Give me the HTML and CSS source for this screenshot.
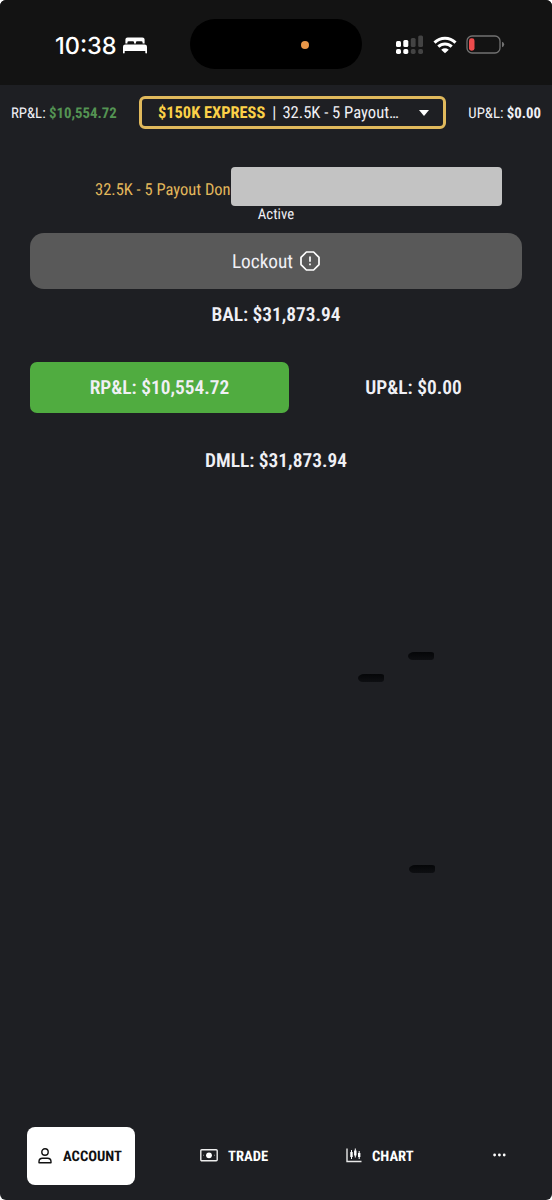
FILE: index.html
```html
<!DOCTYPE html>
<html lang="en">
<head>
    <meta charset="UTF-8">
    <meta name="viewport" content="width=device-width, initial-scale=1.0">
    <title>Account</title>
    <link rel="stylesheet" href="styles.css">
</head>
<body>
    <div class="screen">
        <!-- Status bar -->
        <div class="status-bar">
            <div class="status-left">
                <span class="clock">10:38</span>
                <svg class="bed" width="24" height="17" viewBox="0 0 24 17" fill="#fff">
                    <path d="M2.4 6.6V2.6Q2.4 .4 4.6 .4H19.400Q21.600 .4 21.600 2.600V6.600H19.600V5.500Q19.600 4.200 18.300 4.200H14.200Q12.900 4.200 12.900 5.500V6.600H11.100V5.500Q11.100 4.200 9.800 4.200H5.700Q4.400 4.200 4.400 5.500V6.600Z"/>
                    <path d="M0 15.800V9.800Q0 7.400 2.400 7.400H21.600Q24 7.400 24 9.800V15.800Q24 16.600 23.200 16.600T22.300 15.800V14H1.700V15.800Q1.700 16.600 .9 16.600T0 15.800Z"/>
                </svg>
            </div>
            <div class="island"><span class="mic-dot"></span></div>
            <div class="status-right">
                <svg class="signal" width="28" height="20" viewBox="0 0 28 20">
                    <g fill="#fff">
                        <rect x="0" y="6" width="5" height="6" rx="1.500"/>
                        <rect x="7.300" y="5" width="5" height="7" rx="1.500"/>
                        <rect x="0" y="14" width="5" height="5" rx="1.700"/>
                        <rect x="7.300" y="14" width="5" height="5" rx="1.700"/>
                    </g>
                    <g fill="#434343">
                        <rect x="14.800" y="3" width="4.800" height="9" rx="1.500"/>
                        <rect x="22.200" y="0.500" width="4.800" height="11.500" rx="1.500"/>
                        <rect x="14.800" y="14" width="4.800" height="5" rx="1.700"/>
                        <rect x="22.200" y="14" width="4.800" height="5" rx="1.700"/>
                    </g>
                </svg>
                <svg class="wifi" width="24" height="18" viewBox="0 0 24 18" fill="none" stroke="#fff" stroke-width="3">
                    <path d="M1.500 6.600Q6 2.200 12 2.200T22.500 6.600"/>
                    <path d="M5.300 10.700Q8.200 7.900 12 7.900T18.700 10.700"/>
                    <path d="M8.200 13.700Q12 10.800 15.800 13.700L12 17.300Z" fill="#fff" stroke="none"/>
                </svg>
                <svg class="battery" width="39" height="19" viewBox="0 0 39 19">
                    <rect x="1" y="1" width="33" height="17" rx="5" fill="none" stroke="#727272" stroke-width="1.300"/>
                    <rect x="3" y="3.300" width="5.500" height="12.400" rx="2.400" fill="#ed4b4c"/>
                    <path d="M36 6.800Q38.200 7.300 38.200 9.500T36 12.200Z" fill="#727272"/>
                </svg>
            </div>
        </div>

        <!-- Header with account selector -->
        <div class="header">
            <div class="pnl">RP&amp;L: <b class="gain">$10,554.72</b></div>
            <div class="account-select">
                <b class="plan">$150K EXPRESS</b>
                <span class="divider">|</span>
                <span class="account-name">32.5K - 5 Payout…</span>
                <span class="caret"></span>
            </div>
            <div class="pnl unrealized">UP&amp;L: <b>$0.00</b></div>
        </div>

        <div class="content">
            <div class="account-title">
                <span class="title-text">32.5K - 5 Payout Don</span>
                <span class="account-id"></span>
            </div>
            <div class="account-status">Active</div>
            <div class="lockout">
                <span>Lockout</span>
                <svg width="20" height="20" viewBox="0 0 20 20" fill="none" stroke="#fff" stroke-width="1.700">
                    <path d="M6.400 1H13.600L19 6.400V13.600L13.600 19H6.400L1 13.600V6.400Z" stroke-linejoin="round"/>
                    <path d="M10 5.500V10.800M10 12.500V14.300"/>
                </svg>
            </div>
            <div class="balance">BAL: $31,873.94</div>
            <div class="pnl-row">
                <div class="pnl-box positive">RP&amp;L: $10,554.72</div>
                <div class="pnl-box">UP&amp;L: $0.00</div>
            </div>
            <div class="loss-limit">DMLL: $31,873.94</div>
        </div>

        <!-- Dark marks over the empty area -->
        <span class="mark mark-top"></span>
        <span class="mark mark-middle"></span>
        <span class="mark mark-bottom"></span>

        <!-- Bottom navigation -->
        <div class="nav">
            <div class="nav-item active">
                <svg width="14" height="16" viewBox="0 0 14 16" fill="none" stroke="#111" stroke-width="1.400">
                    <circle cx="7" cy="4" r="3.200"/>
                    <path d="M1 14.800V13.800Q1 10.300 4.500 10.300H9.500Q13 10.300 13 13.800V14.800Z" stroke-linejoin="round"/>
                </svg>
                <span>ACCOUNT</span>
            </div>
            <div class="nav-item trade">
                <svg width="18" height="13" viewBox="0 0 18 13">
                    <rect x=".8" y=".8" width="16.400" height="11" rx="1" fill="none" stroke="#eee" stroke-width="1.400"/>
                    <circle cx="9" cy="6.300" r="2.900" fill="#fff"/>
                    <path d="M3 5.800h.9v.9H3zM14.100 5.800H15v.9h-.9z" fill="#999"/>
                </svg>
                <span>TRADE</span>
            </div>
            <div class="nav-item chart">
                <svg width="16" height="15" viewBox="0 0 16 15">
                    <path d="M1 .5V13.500H15.500" fill="none" stroke="#e8e8e8" stroke-width="1.400"/>
                    <path d="M5.500 2V11M9.300 .5V9.500M13.200 3V11" stroke="#fff" stroke-width="1"/>
                    <path d="M4.300 4h2.400v5H4.300zM8.100 2.400h2.400v5H8.100zM12 5h2.400v4H12z" fill="#fff"/>
                </svg>
                <span>CHART</span>
            </div>
            <div class="nav-item more">
                <svg width="13" height="4" viewBox="0 0 13 4" fill="#fff">
                    <circle cx="1.600" cy="2" r="1.400"/>
                    <circle cx="6.400" cy="2" r="1.400"/>
                    <circle cx="11.200" cy="2" r="1.400"/>
                </svg>
            </div>
        </div>
    </div>
</body>
</html>
```
FILE: styles.css
```css
* {
    box-sizing: border-box;
}

body {
    margin: 0;
    background: #fff;
    font-family: "Roboto Condensed", Roboto, sans-serif;
    font-stretch: 75%;
    text-rendering: geometricPrecision;
    color: #f0f0f5;
}

svg {
    display: block;
    flex-shrink: 0;
}

.screen {
    position: relative;
    display: flex;
    flex-direction: column;
    width: 552px;
    height: 1200px;
    background: #1e1f23;
    border-radius: 6px;
    overflow: hidden;
    white-space: nowrap;
}

/* Status bar */
.status-bar {
    display: grid;
    grid-template-columns: 190px 172px 190px;
    height: 85px;
    padding-top: 19px;
    background: #131313;
}

.status-left {
    display: flex;
    align-items: center;
    height: 51px;
    padding-left: 55px;
    gap: 6px;
}

.clock {
    width: 62px;
    padding-top: 1px;
    font-family: Inter, sans-serif;
    font-stretch: normal;
    font-size: 23.5px;
    font-weight: 550;
    color: #fff;
}

.bed {
    margin-top: 1px;
}

.island {
    display: flex;
    align-items: center;
    height: 50px;
    padding-left: 111px;
    background: #000;
    border-radius: 25px;
}

.mic-dot {
    width: 8px;
    height: 8px;
    margin-top: 1px;
    border-radius: 50%;
    background: #e99748;
}

.status-right {
    display: flex;
    align-items: center;
    height: 51px;
    padding-left: 34px;
}

.wifi {
    margin-left: 9px;
}

.battery {
    margin-left: 9px;
}

/* Header */
.header {
    display: flex;
    align-items: center;
    justify-content: space-between;
    height: 55px;
    padding: 0 11px;
}

.pnl {
    width: 128px;
    padding-top: 1px;
    font-size: 14.8px;
}

.pnl.unrealized {
    width: 95px;
    text-align: right;
}

.gain {
    color: #549453;
}

.account-select {
    display: flex;
    align-items: center;
    width: 307px;
    height: 33px;
    padding: 1px 14px 0 16px;
    border: 3px solid #e0b95c;
    border-radius: 6px;
    font-size: 16.6px;
}

.plan {
    font-size: 16.4px;
    color: #fbd148;
}

.divider {
    margin: 0 6px 0 7px;
}

.plan,
.divider,
.account-name {
    padding-top: 1px;
}

.caret {
    margin-left: auto;
    border-left: 5px solid transparent;
    border-right: 5px solid transparent;
    border-top: 6px solid #fff;
}

/* Account details */
.content {
    padding: 27px 30px 0;
}

.account-title {
    display: flex;
    align-items: center;
    height: 39px;
    padding-left: 65px;
    font-size: 16.5px;
    color: #e2b75b;
}

.title-text {
    width: 136px;
    padding-top: 7px;
}

.account-id {
    width: 271px;
    height: 39px;
    border-radius: 4px;
    background: #c3c3c3;
}

.account-status {
    height: 27px;
    font-size: 14.8px;
    line-height: 17px;
    text-align: center;
}

.lockout {
    display: flex;
    align-items: center;
    justify-content: center;
    gap: 7px;
    height: 56px;
    border-radius: 14px;
    background: #595959;
    font-size: 19.3px;
}

.balance,
.pnl-box,
.loss-limit {
    font-size: 19.4px;
    font-weight: 600;
    line-height: 51px;
    text-align: center;
}

.pnl-row {
    display: grid;
    grid-template-columns: 259px 1fr;
    margin: 22px 0;
}

.pnl-box {
    padding-left: 16px;
    border-radius: 7px;
}

.pnl-box.positive {
    padding-left: 0;
    background: #50ac40;
}

/* Smudges */
.mark {
    position: absolute;
    width: 26px;
    height: 8px;
    border-radius: 8px 4px 4px 6px / 5px 3px 4px 5px;
    background: linear-gradient(#050608, #0e0f12);
    filter: blur(0.6px);
}

.mark-top {
    left: 408px;
    top: 652px;
}

.mark-middle {
    left: 358px;
    top: 674px;
}

.mark-bottom {
    left: 409px;
    top: 865px;
}

/* Bottom navigation */
.nav {
    display: grid;
    grid-template-columns: 108px 173px 131px 87px;
    height: 58px;
    margin: auto 0 15px 27px;
    font-size: 14.6px;
    font-weight: 700;
    color: #fff;
}

.nav-item {
    display: flex;
    align-items: center;
    gap: 10px;
}

.nav-item.active {
    gap: 11px;
    padding-left: 11px;
    border-radius: 8px;
    background: #fff;
    color: #111;
}

.trade {
    padding-left: 65px;
}

.trade svg,
.chart svg,
.more svg {
    margin-top: -2px;
}

.chart {
    padding-left: 38px;
}

.more {
    padding-left: 54px;
}
```
